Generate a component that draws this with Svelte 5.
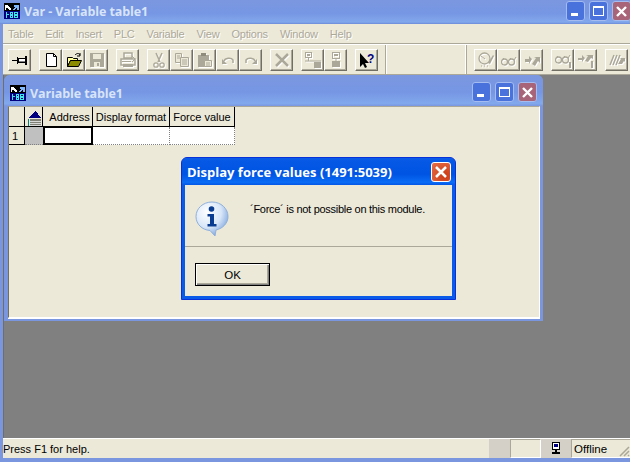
<script>
  const menus = ['Table', 'Edit', 'Insert', 'PLC', 'Variable', 'View', 'Options', 'Window', 'Help']

  const icons = {
    pin: '<path d="M0 8h5v1H0z" fill="#000"/><path d="M5 5h1v7H5zM6 6h1v5H6zM7 6h6v1H7zM7 10h6v1H7zM13 4h2v9h-2z" fill="#000"/><rect x="7" y="7" width="6" height="2" fill="#fff"/><path d="M7 9h6v1H7z" fill="#808080"/>',
    new: '<path d="M3.500 1.500h7l3 3v10h-10z" fill="#fff" stroke="#000"/><path d="M10.500 1.500v3h3" fill="none" stroke="#000"/>',
    open: '<path d="M1.500 5.500h5l1 1h4v2h-7l-3 6z" fill="#ffff9c" stroke="#000"/><path d="M1.500 14.500l3-6h11l-3 6z" fill="#8c8c00" stroke="#000"/><path d="M9 3c2-2 4-2 5 0M14 1v3h-3" fill="none" stroke="#000"/>',
    save: '<path d="M1 1h14v14H1z" fill="#aca899"/><path d="M4 2h8v5H4z" fill="#ece9d8"/><path d="M5 10h6v5H5z" fill="#ece9d8"/><path d="M8 11h2v3H8z" fill="#aca899"/>',
    print: '<path d="M4 1h8v5H4zM1 7h14v6H1z" fill="none" stroke="#aca899" stroke-width="1.500"/><path d="M3 12h10v3H3zM2 9h9v1H2z" fill="#aca899"/><path d="M12 4l3 3-3 3" fill="none" stroke="#aca899"/>',
    cut: '<path d="M5 1l4 9M11 1L7 10" stroke="#aca899" stroke-width="1.500" fill="none"/><circle cx="5" cy="13" r="2.200" fill="none" stroke="#aca899" stroke-width="1.300"/><circle cx="11" cy="13" r="2.200" fill="none" stroke="#aca899" stroke-width="1.300"/>',
    copy: '<path d="M1.500 1.500h6v9h-6z" fill="#ece9d8" stroke="#aca899"/><path d="M6.500 5.500h8v9h-8z" fill="#ece9d8" stroke="#aca899"/><path d="M8 8h5M8 10h5M8 12h5M3 4h3M3 6h3" stroke="#aca899"/>',
    paste: '<path d="M1 3h11v12H1z" fill="#aca899"/><path d="M4 1h5v3H4z" fill="#8f8c7d"/><path d="M7.500 8.500h7v6h-7z" fill="#ece9d8" stroke="#aca899"/><path d="M9 11h4M9 13h4" stroke="#aca899"/>',
    undo: '<path d="M4 9c1-3 7-4 9-1v3" fill="none" stroke="#aca899" stroke-width="1.500"/><path d="M2 7v5h5z" fill="#aca899"/>',
    redo: '<path d="M12 9C11 6 5 5 3 8v3" fill="none" stroke="#aca899" stroke-width="1.500"/><path d="M14 7v5H9z" fill="#aca899"/>',
    del: '<path d="M2 2l12 12M14 2L2 14" stroke="#aca899" stroke-width="2.500" fill="none"/>',
    net: '<rect x="0.500" y="0.500" width="6" height="5" fill="none" stroke="#aca899"/><path d="M3.500 6v3M0 9h16" stroke="#aca899"/><rect x="9" y="10" width="7" height="6" fill="#aca899"/><rect x="2" y="2" width="3" height="2" fill="#aca899"/>',
    node: '<rect x="4.500" y="0.500" width="7" height="6" fill="none" stroke="#aca899"/><path d="M8 7v2" stroke="#aca899"/><rect x="4" y="9" width="8" height="6" fill="#aca899"/><rect x="6" y="2" width="4" height="2" fill="#aca899"/>',
    help: '<path d="M1 1v14l3-3 2 4 2-1-2-4h4z" fill="#000"/><text x="8" y="11" font-family="Liberation Sans, sans-serif" font-weight="700" font-size="12" fill="#000080">?</text>',
    clock: '<circle cx="6.500" cy="6.500" r="5.500" fill="none" stroke="#aca899" stroke-width="1.300"/><path d="M3 4l4 3" stroke="#aca899"/><path d="M10 11l5-8 1 1-4 8z" fill="#aca899"/><path d="M3 14h1M6 14h1M9 14h1" stroke="#aca899"/>',
    glasses: '<circle cx="3.500" cy="10" r="3" fill="none" stroke="#aca899" stroke-width="1.300"/><circle cx="10.500" cy="10" r="3" fill="none" stroke="#aca899" stroke-width="1.300"/><path d="M1 8l2-2M8 8l2-2M6 9h2M13 8l2-3" stroke="#aca899" fill="none"/>',
    arrows: '<path d="M1 7h4V4l3 3-3 5v-2H1z" fill="#aca899"/><path d="M8 12l4-6-2-1h6v6l-2-2-3 5z" fill="#aca899"/>',
    glassesBar: '<circle cx="3.500" cy="8" r="3" fill="none" stroke="#aca899" stroke-width="1.300"/><circle cx="10.500" cy="8" r="3" fill="none" stroke="#aca899" stroke-width="1.300"/><path d="M1 6l2-2M8 6l2-2M6 7h2M13 6l2-3" stroke="#aca899" fill="none"/><rect x="14" y="10" width="2" height="6" fill="#aca899"/>',
    arrowsBar: '<path d="M0 6h4V3l3 3-3 4V8H0z" fill="#aca899"/><path d="M7 9l3-5-2-1h7v4l-2-1-3 4z" fill="#aca899"/><rect x="13" y="9" width="2" height="7" fill="#aca899"/>',
    ramp: '<path d="M1 13L5 3M4 13L8 3M7 13l4-10" stroke="#aca899" stroke-width="1.500" fill="none"/><path d="M9 12l3-5-1-1h5v4l-1-1-2 3z" fill="#aca899"/>',
  }

  const toolbar = [
    ['pin'],
    ['new', 'open', 'save'],
    ['print'],
    ['cut', 'copy', 'paste', 'undo', 'redo'],
    ['del'],
    ['net', 'node'],
    ['help'],
    'sep',
    ['clock', 'glasses', 'arrows'],
    ['glassesBar', 'arrowsBar'],
    ['ramp'],
  ]
  const enabled = ['pin', 'new', 'open', 'help']
</script>

{#snippet appIcon()}
  <svg class="app-icon" width="16" height="16" viewBox="0 0 16 16" shape-rendering="crispEdges">
    <rect width="16" height="16" fill="#000" />
    <path d="M1 2h3v1h1v1h1v1h1v2H5V6H4V5H2v2H1z" fill="#fff" />
    <path d="M9 6h1V5h1V4h-1V2h5v5h-2V5h-1v1h-1v1H9z" fill="#7fb8ff" />
    <rect x="0" y="8" width="16" height="8" fill="#000080" />
    <path d="M2 9h1v2h2v1H3v3H2zM6 9h3v6H6zM10 9h4v6h-4z" fill="#3fe8e8" />
    <path d="M7 10h1v1H7zM7 13h1v1H7zM11 10h2v1h-2zM11 13h2v1h-2z" fill="#000080" />
  </svg>
{/snippet}

{#snippet caption(kind)}
  <div class="cap {kind}">
    {#if kind === 'min'}
      <i class="min-bar"></i>
    {:else if kind === 'max'}
      <i class="max-box"></i>
    {:else}
      <svg width="13" height="13" viewBox="0 0 13 13"><path d="M2 2l9 9M11 2l-9 9" stroke="#fff" stroke-width="2.400" /></svg>
    {/if}
  </div>
{/snippet}

<div class="frame">
  <header class="titlebar">
    {@render appIcon()}
    <span class="title">Var - Variable table1</span>
    <div class="caps">
      {@render caption('min')}
      {@render caption('max')}
      {@render caption('close')}
    </div>
  </header>

  <nav class="menubar">
    {#each menus as m}
      <span>{m}</span>
    {/each}
  </nav>

  <div class="toolbar">
    {#each toolbar as group}
      {#if group === 'sep'}
        <div class="sep"></div>
      {:else}
        <div class="group">
          {#each group as name}
            <div class="tool">
              <svg class:off={!enabled.includes(name)} width="16" height="16" viewBox="0 0 16 16">{@html icons[name]}</svg>
            </div>
          {/each}
        </div>
      {/if}
    {/each}
  </div>

  <main class="mdi">
    <section class="child">
      <header class="child-title">
        {@render appIcon()}
        <span class="title">Variable table1</span>
        <div class="caps">
          {@render caption('min')}
          {@render caption('max')}
          {@render caption('close')}
        </div>
      </header>
      <div class="client">
        <div class="grid">
          <div class="th"></div>
          <div class="th corner">
            <svg width="17" height="17" viewBox="0 0 17 17" shape-rendering="crispEdges">
              <path d="M4 9l6-7h1l5 7z" fill="#000080" />
              <path d="M3 10h1v7H3z" fill="#008080" />
              <path d="M5 10h11v7H5z" fill="#000" opacity=".45" />
              <path d="M5 12h11M5 14h11M5 16h11" stroke="#d8d8d8" />
            </svg>
          </div>
          <div class="th address">Address</div>
          <div class="th">Display format</div>
          <div class="th">Force value</div>
          <div class="rowhead">1</div>
          <div class="td gray"></div>
          <div class="td selected"></div>
          <div class="td"></div>
          <div class="td"></div>
        </div>
      </div>
    </section>

    <div class="dialog">
      <header class="dialog-title">
        <span>Display force values (1491:5039)</span>
        <div class="dialog-close">
          <svg width="14" height="14" viewBox="0 0 14 14"><path d="M2 2l10 10M12 2L2 12" stroke="#fff" stroke-width="2.500" /></svg>
        </div>
      </header>
      <div class="dialog-body">
        <div class="message">
          <svg width="34" height="36" viewBox="0 0 34 36">
            <defs>
              <radialGradient id="bubble" cx="0.35" cy="0.3" r="0.8">
                <stop offset="0" stop-color="#ffffff" />
                <stop offset="0.55" stop-color="#d8e6f8" />
                <stop offset="1" stop-color="#6f9bd8" />
              </radialGradient>
            </defs>
            <path d="M17 1C8 1 1 7.500 1 15.500 1 23 7 29 15 29.500l5 5.500 1-6c7-1.500 12-7 12-13.500C33 7.500 26 1 17 1z" fill="url(#bubble)" stroke="#8fb0dc" />
            <circle cx="16.500" cy="8" r="2.800" fill="#0a3d91" />
            <path d="M12.500 13h6.500v10h2.500v2.500h-9V23h2.500v-7.500h-2.500z" fill="#0a3d91" />
          </svg>
          <p>´Force´ is not possible on this module.</p>
        </div>
        <div class="rule"></div>
        <div class="actions">
          <div class="ok">OK</div>
        </div>
      </div>
    </div>
  </main>

  <footer class="status">
    <span class="help">Press F1 for help.</span>
    <div class="pane gray-pane"></div>
    <div class="pane sunken"></div>
    <div class="pane gray-pane pc">
      <svg width="14" height="14" viewBox="0 0 14 14" shape-rendering="crispEdges">
        <path d="M3 1h8v8H3z" fill="#000" />
        <path d="M4 2h6v6H4z" fill="#fff" />
        <path d="M5 3h4v3H5z" fill="#000080" />
        <path d="M6 9h2v2H6zM3 11h8v2H3z" fill="#000" />
      </svg>
    </div>
    <div class="pane sunken offline">
      Offline
      <svg class="grip" width="12" height="12" viewBox="0 0 12 12"><path d="M11 2L2 11M11 6l-5 5M11 10l-1 1" stroke="#aca899" stroke-width="1.500" /></svg>
    </div>
  </footer>
</div>

<style>
  :global(body) {
    background: #fff;
    overflow: hidden;
  }

  .frame {
    display: flex;
    flex-direction: column;
    width: 630px;
    height: 462px;
    box-sizing: border-box;
    padding: 0 0 4px;
    background: #7a96df;
    font: 11px 'Liberation Sans', Arial, sans-serif;
    color: #000;
  }

  .titlebar {
    display: flex;
    align-items: center;
    flex: none;
    height: 24px;
    padding: 0 0 2px 4px;
    box-sizing: border-box;
    background: linear-gradient(#7b97df, #7696e4 55%, #82a8ec 92%, #6d8ad8);
  }

  .title {
    margin-left: 4px;
    font: 700 12.500px 'Open Sans', Verdana, sans-serif;
    letter-spacing: -0.100px;
    color: #d8e4f8;
    white-space: nowrap;
  }

  .app-icon {
    flex: none;
  }

  .caps {
    display: flex;
    gap: 4px;
    margin-left: auto;
  }

  .titlebar .caps {
    margin-right: -1px;
  }

  .child-title .caps {
    margin-right: 6px;
    margin-top: -2px;
  }

  .cap {
    position: relative;
    display: flex;
    align-items: center;
    justify-content: center;
    width: 19px;
    height: 20px;
    border: 1px solid #a4bcf0;
    border-radius: 3px;
    box-sizing: border-box;
    background: #4a72dc;
  }

  .cap.close {
    background: #a86478;
  }

  .min-bar {
    position: absolute;
    left: 4px;
    bottom: 4px;
    width: 7px;
    height: 3px;
    background: #fff;
  }

  .max-box {
    width: 11px;
    height: 10px;
    box-sizing: border-box;
    border: 1px solid #fff;
    border-top-width: 2px;
  }

  .menubar {
    display: flex;
    flex: none;
    gap: 12px;
    height: 19px;
    align-items: center;
    margin: 0 0 0 3px;
    padding: 0 5px;
    background: #ece9d8;
    color: #aca899;
    font-size: 11px;
    letter-spacing: -0.200px;
    text-shadow: 1px 1px 0 #fff;
    border-bottom: 1px solid #aca899;
    box-sizing: content-box;
  }

  .toolbar {
    display: flex;
    flex: none;
    gap: 8px;
    height: 31px;
    box-sizing: border-box;
    margin-left: 3px;
    padding: 4px 0 0 5px;
    background: #ece9d8;
    border-top: 1px solid #fff;
    border-bottom: 1px solid #aca899;
  }

  .group {
    display: flex;
  }

  .tool {
    display: flex;
    align-items: center;
    justify-content: center;
    width: 23px;
    height: 22px;
    box-sizing: border-box;
    border: 1px solid;
    border-color: #fff #716f64 #716f64 #fff;
    box-shadow: inset -1px -1px 0 #aca899;
  }

  .tool svg.off {
    filter: drop-shadow(1px 1px 0 #fff);
  }

  .sep {
    width: 82px;
    height: 29px;
    margin: -4px -1px 0;
    box-sizing: border-box;
    border-left: 1px solid #aca899;
    border-right: 1px solid #aca899;
    box-shadow: inset 1px 0 0 #fff, inset -1px 0 0 #fff;
  }

  .mdi {
    position: relative;
    flex: 1;
    margin-left: 3px;
    border-left: 1px solid #716f64;
    background: #808080;
  }

  .child {
    position: absolute;
    top: 0;
    left: 0;
    display: flex;
    flex-direction: column;
    width: 539px;
    height: 246px;
    box-sizing: border-box;
    padding: 0 3px 3px 4px;
    border-radius: 6px 6px 0 0;
    background: #7a96df;
  }

  .child-title {
    display: flex;
    align-items: center;
    flex: none;
    height: 31px;
    padding: 5px 0 0 6px;
    box-sizing: border-box;
    margin: 0 -3px 0 -4px;
    border-radius: 6px 6px 0 0;
    background: linear-gradient(#7b97df, #7696e4 55%, #82a8ec 92%, #7a96df);
  }

  .client {
    flex: 1;
    box-sizing: border-box;
    background: #ece9d8;
    border: 1px solid;
    border-color: #aca899 #fff #fff #716f64;
    box-shadow: 0 1px 0 #fff;
  }

  .grid {
    display: grid;
    grid-template-columns: 16px 18px 50px 77px 65px;
    grid-template-rows: 20px 18px;
    width: 226px;
    font-size: 11px;
  }

  .th {
    display: flex;
    align-items: center;
    justify-content: center;
    box-sizing: border-box;
    border-right: 1px solid #000;
    border-bottom: 1px solid #000;
    white-space: nowrap;
  }

  .address {
    padding-left: 4px;
  }

  .corner {
    padding-top: 1px;
  }

  .rowhead {
    display: flex;
    align-items: center;
    padding-left: 3px;
    box-sizing: border-box;
    border-right: 1px solid #000;
    border-bottom: 1px solid #000;
  }

  .td {
    box-sizing: border-box;
    background: #fff;
    border-right: 1px dotted #808080;
    border-bottom: 1px dotted #808080;
  }

  .td.gray {
    background: #c0c0c0;
    border-right: none;
  }

  .td.selected {
    border: 2px solid #000;
    outline: 1px solid #000;
    outline-offset: -1px;
    margin-top: -1px;
  }

  .dialog {
    position: absolute;
    left: 177px;
    top: 82px;
    display: flex;
    flex-direction: column;
    width: 275px;
    height: 143px;
    box-sizing: border-box;
    padding: 0 3px 3px;
    border: 1px solid #0831d9;
    border-radius: 6px 6px 0 0;
    background: #0a5be8;
  }

  .dialog-title {
    display: flex;
    align-items: center;
    justify-content: space-between;
    flex: none;
    height: 27px;
    margin: 0 -3px;
    padding: 1px 4px 0 5px;
    box-sizing: border-box;
    border-radius: 5px 5px 0 0;
    background: linear-gradient(#0a5be8, #0458e4 15%, #0054e3 60%, #0a6cf5 90%, #0458e4);
    color: #fff;
    font: 700 13px 'Open Sans', Verdana, sans-serif;
  }

  .dialog-close {
    display: flex;
    align-items: center;
    justify-content: center;
    width: 20px;
    height: 20px;
    box-sizing: border-box;
    border: 1px solid #fff;
    border-radius: 3px;
    background: radial-gradient(circle at 70% 70%, #c83a14, #e8704a);
  }

  .dialog-body {
    display: flex;
    flex-direction: column;
    flex: 1;
    background: #ece9d8;
  }

  .message {
    display: flex;
    align-items: flex-start;
    gap: 21px;
    height: 61px;
    box-sizing: border-box;
    padding: 16px 0 0 10px;
  }

  .message p {
    margin: 0;
    padding-top: 2px;
    font-size: 11px;
    letter-spacing: -0.280px;
    white-space: nowrap;
  }

  .rule {
    height: 1px;
    background: #aca899;
  }

  .actions {
    padding: 16px 0 0 10px;
  }

  .ok {
    display: flex;
    align-items: center;
    justify-content: center;
    width: 75px;
    height: 23px;
    box-sizing: border-box;
    border: 1px solid #000;
    box-shadow: inset 1px 1px 0 #fff, inset -1px -1px 0 #808080, inset -2px -2px 0 #aca899;
    font-size: 11.500px;
  }

  .status {
    display: flex;
    flex: none;
    height: 20px;
    margin-left: 3px;
    box-sizing: border-box;
    background: #ece9d8;
    border-top: 1px solid #fff;
  }

  .help {
    flex: none;
    width: 486px;
    line-height: 21px;
    font-size: 11px;
  }

  .pane {
    flex: none;
    box-sizing: border-box;
  }

  .gray-pane {
    width: 21px;
    background: #d4d0c8;
  }

  .sunken {
    width: 31px;
    border: 1px solid;
    border-color: #aca899 #fff #fff #aca899;
  }

  .pc {
    display: flex;
    justify-content: center;
    width: 30px;
    padding-top: 2px;
  }

  .offline {
    position: relative;
    width: 59px;
    padding-left: 2px;
    line-height: 19px;
    font-size: 11.500px;
    border-right: none;
  }

  .grip {
    position: absolute;
    right: 0;
    bottom: 0;
  }
</style>
